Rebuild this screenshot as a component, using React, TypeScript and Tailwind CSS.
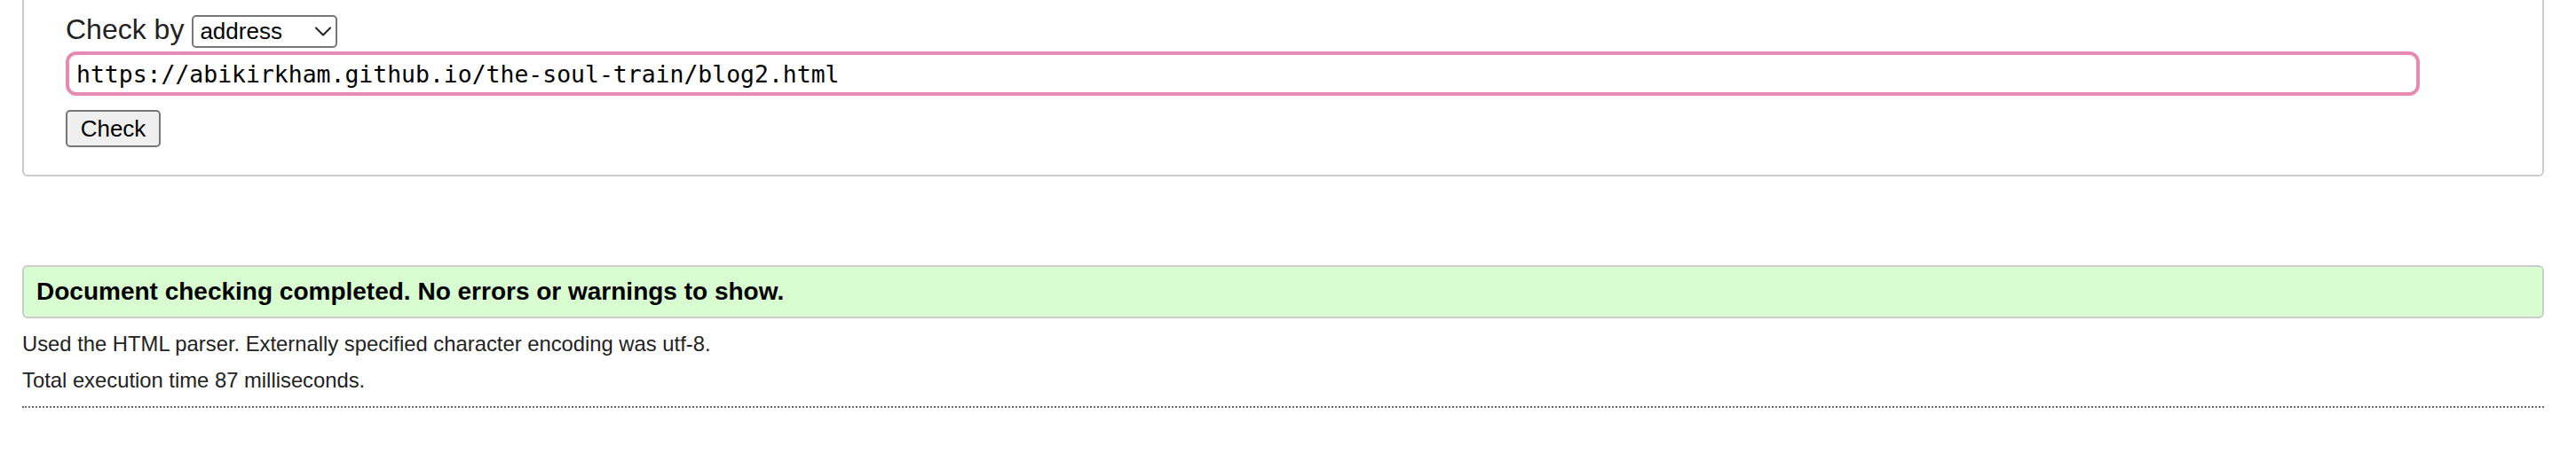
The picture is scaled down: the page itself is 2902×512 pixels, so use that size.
import React from "react";

export default function App() {
  const sans = { fontFamily: '"Liberation Sans", Arial, Helvetica, sans-serif' };
  return (
    <div className="w-[2902px] h-[512px] bg-white overflow-hidden pl-[25px] pr-[36px]" style={sans}>
      {/* Form panel (top cut off) */}
      <div className="border-x-2 border-b-2 border-[#cccccc] rounded-b-[6px] pl-[47px] pb-[31px]">
        <div className="flex items-start gap-[9px] pt-[17px]">
          <span className="text-[32px] leading-[33px] text-[#222222]">Check by</span>
          <div className="flex items-center w-[164px] h-[37px] border-2 border-[#767676] rounded-[5px] pl-[7px] pr-[5px] bg-white">
            <span className="flex-1 text-[26px] text-black">address</span>
            <svg width="18" height="11" viewBox="0 0 18 11" className="shrink-0">
              <polyline points="1,1.5 9,9.5 17,1.5" fill="none" stroke="#222" strokeWidth="2" strokeLinecap="round" strokeLinejoin="round" />
            </svg>
          </div>
        </div>
        <input
          readOnly
          value="https://abikirkham.github.io/the-soul-train/blog2.html"
          className="block mt-[4px] w-[2652px] h-[50px] border-4 border-[#e68ab3] rounded-[12px] pl-[8px] text-[26.45px] text-black outline-none bg-white"
          style={{ fontFamily: '"DejaVu Sans Mono", "Liberation Mono", monospace' }}
        />
        <button className="block mt-[16px] w-[107px] h-[42px] border-2 border-[#767676] rounded-[5px] bg-[#efefef] text-[26px] text-black">
          Check
        </button>
      </div>

      {/* Result */}
      <div className="mt-[100px] h-[60px] border-2 border-[#cccccc] rounded-[6px] bg-[#d8fdd1] flex items-center pl-[14px]">
        <span className="text-[28px] font-bold text-black">
          Document checking completed. No errors or warnings to show.
        </span>
      </div>
      <p className="mt-[8px] text-[23.8px] leading-[41px] text-[#222222]">
        Used the HTML parser. Externally specified character encoding was utf-8.
      </p>
      <p className="text-[23.8px] leading-[41px] text-[#222222]">Total execution time 87 milliseconds.</p>
      <div className="mt-[9px] border-t-2 border-dotted border-[#6b6b6b]" />
    </div>
  );
}
